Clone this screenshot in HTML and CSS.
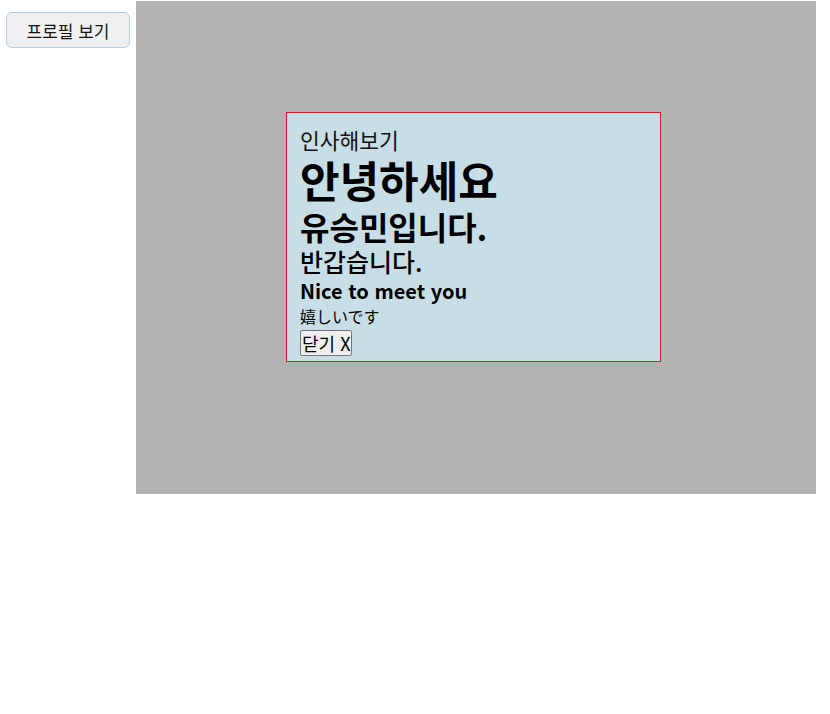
FILE: index.html
```html
<!DOCTYPE html>
<html lang="ko">
<head>
<meta charset="utf-8">
<link rel="stylesheet" href="styles.css">
</head>
<body>
<button class="open-btn">프로필 보기</button>
<div class="backdrop">
  <div class="modal">
    <p class="t1">인사해보기</p>
    <h1 class="t2">안녕하세요</h1>
    <h2 class="t3">유승민입니다.</h2>
    <h3 class="t4">반갑습니다.</h3>
    <h4 class="t5">Nice to meet you</h4>
    <p class="t6">嬉しいです</p>
    <button class="close-btn">닫기 X</button>
  </div>
</div>
</body>
</html>
```
FILE: styles.css
```css
html, body {
  margin: 0;
  padding: 0;
  background: #ffffff;
}
body {
  display: flex;
  align-items: flex-start;
  padding-top: 1px;
  font-family: "Noto Sans CJK KR", "Noto Sans", sans-serif;
  color: #000;
}
.open-btn {
  margin: 11px 6px 0 6px;
  width: 124px;
  height: 36px;
  box-sizing: border-box;
  background: #f0f0f0;
  border: 1px solid #a8d2e2;
  border-radius: 6px;
  font-family: "Noto Sans CJK KR", sans-serif;
  font-size: 17px;
  color: #111;
  padding: 0;
}
.backdrop {
  width: 680px;
  height: 493px;
  background: #b3b3b3;
  padding: 111px 0 0 150px;
  box-sizing: border-box;
}
.modal {
  width: 375px;
  height: 250px;
  box-sizing: border-box;
  background: #c8dee7;
  border: 1px solid #d01c1c;
  padding: 13px 13px 0 13px;
  display: flex;
  flex-direction: column;
  align-items: flex-start;
}
.modal p, .modal h1, .modal h2, .modal h3, .modal h4 {
  margin: 0;
}
.t1 {
  font-size: 21.5px;
  line-height: 27px;
  font-weight: 400;
  color: #111;
}
.t2 {
  font-size: 43px;
  line-height: 53px;
  font-weight: 700;
}
.t3 {
  font-size: 32px;
  line-height: 40px;
  font-weight: 700;
}
.t4 {
  font-size: 25px;
  line-height: 31px;
  font-weight: 500;
}
.t5 {
  font-size: 20px;
  line-height: 28px;
  font-weight: 700;
}
.t6 {
  font-size: 16px;
  line-height: 22px;
}
.close-btn {
  margin-top: 3px;
  height: 26px;
  padding: 0 1px;
  font-family: "Noto Sans CJK KR", sans-serif;
  font-size: 18px;
  line-height: 22px;
  background: #efefef;
  border: 1px solid #767676;
  border-radius: 2px;
  color: #000;
}
```
